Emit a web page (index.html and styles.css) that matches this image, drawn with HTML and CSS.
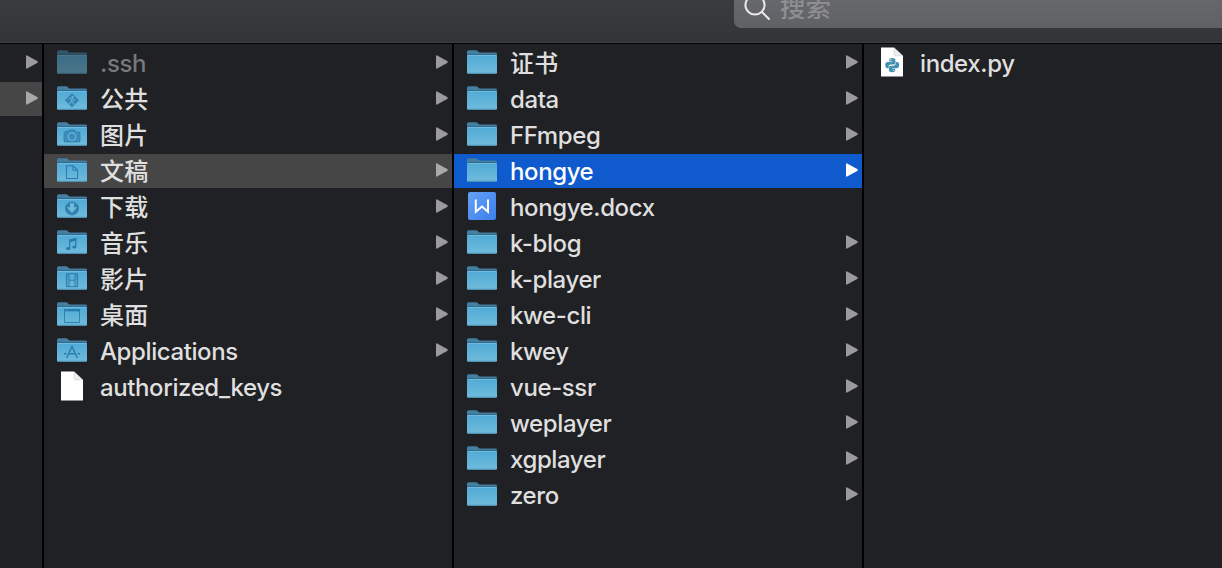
FILE: index.html
```html
<!DOCTYPE html>
<html lang="zh-CN">
<head>
<meta charset="utf-8">
<title>Finder</title>
<link rel="stylesheet" href="styles.css">
</head>
<body>
<svg class="sprites" aria-hidden="true">
  <defs>
    <linearGradient id="front" x1="0" y1="0" x2="0" y2="1">
      <stop offset="0" stop-color="#50aad6"/>
      <stop offset="1" stop-color="#70bbdc"/>
    </linearGradient>
    <linearGradient id="wps" x1="0" y1="0" x2="1" y2="1">
      <stop offset="0" stop-color="#64a0f6"/>
      <stop offset="1" stop-color="#3b80ec"/>
    </linearGradient>
    <symbol id="folder" viewBox="0 0 30 24">
      <path d="M0 8V1.8Q0 .2 1.6 .2H9Q10.3 .2 11 1.2Q11.8 2.4 13.2 2.4H28.6Q30 2.4 30 3.8V8Z" fill="#427fa0"/>
      <path d="M0 4H30V6H0Z" fill="#37698a"/>
      <path d="M0 6.2Q0 5 1.2 5H28.8Q30 5 30 6.2V22.4Q30 23.8 28.6 23.8H1.4Q0 23.8 0 22.4Z" fill="url(#front)"/>
      <path d="M.6 5.5H29.4" stroke="#70bee2" stroke-width=".9"/>
      <path d="M.8 23.3H29.2" stroke="#4b8fb0" stroke-width=".9"/>
    </symbol>
    <symbol id="arrow" viewBox="0 0 12 14">
      <path d="M0 1.2Q0 0 1.1 .5L11.2 6.1Q12.4 7 11.2 7.9L1.1 13.5Q0 14 0 12.8Z" fill="currentColor"/>
    </symbol>
    <symbol id="page" viewBox="0 0 24 30">
      <path d="M1 .5H14L23 9V29.2Q23 29.6 22.6 29.6H1.4Q1 29.6 1 29.2Z" fill="#fff"/>
      <path d="M14 .5V7.5Q14 9 15.5 9H23Z" fill="#ededed"/>
      <path d="M14.2 1V7.4Q14.2 8.8 15.6 8.8H22.6" fill="none" stroke="#d2d2d2" stroke-width=".6"/>
    </symbol>
    <symbol id="public" viewBox="0 0 30 24">
      <path d="M15 7L22.2 14.2L15 21.4L7.8 14.2Z" fill="#3486b4"/>
      <circle cx="15.6" cy="10.8" r="1" fill="#70b9dc"/>
      <path d="M12 13.6L13.4 12.1L15.6 12.3L16.5 14L18 14.5M15.2 12.5L14.5 15L16.3 16.5V18.5M14.3 15L13.7 16.7L12 17.7" fill="none" stroke="#70b9dc" stroke-width="1"/>
    </symbol>
    <symbol id="camera" viewBox="0 0 30 24">
      <path d="M8 10H11L12.2 8H17.8L19 10H22Q23 10 23 11V19Q23 20 22 20H8Q7 20 7 19V11Q7 10 8 10Z" fill="#3b8fbd" stroke="#2b7ba8" stroke-width=".7"/>
      <path d="M8.5 9.2H10.5" stroke="#2b7ba8" stroke-width="1"/>
      <circle cx="15" cy="14.6" r="3.7" fill="#3d8fbd" stroke="#7bc0df" stroke-width="1"/>
      <circle cx="15" cy="14.6" r="2.5" fill="none" stroke="#2b7ba8" stroke-width=".6"/>
    </symbol>
    <symbol id="document" viewBox="0 0 30 24">
      <path d="M9.5 7.7H16L20.6 12.3V20.5H9.5ZM16 7.7V12.3H20.6" fill="none" stroke="#2c7dab" stroke-width="1.1"/>
    </symbol>
    <symbol id="download" viewBox="0 0 30 24">
      <circle cx="15" cy="14.4" r="7" fill="#3182b0"/>
      <path d="M13 9.2H17V13.2H20.2L15 19L9.8 13.2H13Z" fill="#6eb9dc"/>
    </symbol>
    <symbol id="music" viewBox="0 0 30 24">
      <path d="M12.7 18V10.2L18.8 8.7V16.8" fill="none" stroke="#287aa9" stroke-width="1.2"/>
      <path d="M12.2 9.5L19.3 7.8V10.6L12.2 12.3Z" fill="#287aa9"/>
      <ellipse cx="11.2" cy="18.5" rx="2.2" ry="1.6" fill="#287aa9"/>
      <ellipse cx="17.3" cy="17" rx="2.1" ry="1.6" fill="#287aa9"/>
    </symbol>
    <symbol id="film" viewBox="0 0 30 24">
      <path d="M9.4 7.8H20.6V20.6H9.4ZM12 7.8V20.6M18 7.8V20.6M12 14.2H18" fill="none" stroke="#2c7dab" stroke-width="1"/>
      <path d="M10.7 8V20.6M19.3 8V20.6" stroke="#3081ae" stroke-width="2" stroke-dasharray=".9 1.4"/>
    </symbol>
    <symbol id="desktop" viewBox="0 0 30 24">
      <path d="M7.5 7.8H22.5V20.5H7.5Z" fill="none" stroke="#3081ae" stroke-width="1"/>
      <path d="M7 8.2H23" stroke="#287aa9" stroke-width="2.2"/>
      <path d="M8.5 8.1H12" stroke="#70b9dc" stroke-width=".6" stroke-dasharray=".7 .5"/>
    </symbol>
    <symbol id="apps" viewBox="0 0 30 24">
      <path d="M9.6 20L15.4 7.6M14.6 7.6L20.4 20" fill="none" stroke="#2c7dab" stroke-width="1.4"/>
      <path d="M7 15.8H9.4M11 15.8H17.5M20.6 15.8H23" stroke="#2c7dab" stroke-width="1.5"/>
    </symbol>
    <symbol id="writer" viewBox="0 0 30 30">
      <rect x="1" y="1" width="28" height="28" rx="2" fill="url(#wps)"/>
      <path d="M8.8 8.5V20.8L15 15.5L21 20.8V8.5" fill="none" stroke="#fff" stroke-width="2"/>
    </symbol>
    <symbol id="python" viewBox="0 0 24 30">
      <use href="#page"/>
      <g transform="translate(5.2 11)">
        <path id="snake" d="M6.8 0C4.5 0 4 .8 4 2V3.4H7.2V4H2.5C.9 4 0 5.2 0 7.1S.9 10.2 2.2 10.2H3.5V8.6C3.5 7.3 4.5 6.5 5.7 6.5H8.5C9.5 6.5 10.2 5.7 10.2 4.7V2C10.2 .8 9.1 0 6.8 0ZM5.5 1.1A.6 .6 0 1 1 5.5 2.3A.6 .6 0 0 1 5.5 1.1Z" fill="#4490b0" fill-rule="evenodd"/>
        <use href="#snake" transform="rotate(180 7 7.1)"/>
      </g>
    </symbol>
  </defs>
</svg>
<div class="window">
  <header class="toolbar">
    <div class="search">
      <svg class="lens" viewBox="0 0 28 28"><circle cx="11" cy="11" r="9.6"/><path d="M18 18L25 25"/></svg>
      <span>搜索</span>
    </div>
  </header>
  <main class="columns">
    <ul class="column parent">
      <li class="row"><svg class="arrow"><use href="#arrow"/></svg></li>
      <li class="row active"><svg class="arrow"><use href="#arrow"/></svg></li>
    </ul>
    <ul class="column">
      <li class="row hidden"><svg class="folder"><use href="#folder"/></svg><span class="name">.ssh</span><svg class="arrow"><use href="#arrow"/></svg></li>
      <li class="row"><svg class="folder"><use href="#folder"/><use href="#public"/></svg><span class="name cjk">公共</span><svg class="arrow"><use href="#arrow"/></svg></li>
      <li class="row"><svg class="folder"><use href="#folder"/><use href="#camera"/></svg><span class="name cjk">图片</span><svg class="arrow"><use href="#arrow"/></svg></li>
      <li class="row active"><svg class="folder"><use href="#folder"/><use href="#document"/></svg><span class="name cjk">文稿</span><svg class="arrow"><use href="#arrow"/></svg></li>
      <li class="row"><svg class="folder"><use href="#folder"/><use href="#download"/></svg><span class="name cjk">下载</span><svg class="arrow"><use href="#arrow"/></svg></li>
      <li class="row"><svg class="folder"><use href="#folder"/><use href="#music"/></svg><span class="name cjk">音乐</span><svg class="arrow"><use href="#arrow"/></svg></li>
      <li class="row"><svg class="folder"><use href="#folder"/><use href="#film"/></svg><span class="name cjk">影片</span><svg class="arrow"><use href="#arrow"/></svg></li>
      <li class="row"><svg class="folder"><use href="#folder"/><use href="#desktop"/></svg><span class="name cjk">桌面</span><svg class="arrow"><use href="#arrow"/></svg></li>
      <li class="row"><svg class="folder"><use href="#folder"/><use href="#apps"/></svg><span class="name">Applications</span><svg class="arrow"><use href="#arrow"/></svg></li>
      <li class="row"><svg class="file"><use href="#page"/></svg><span class="name">authorized_keys</span></li>
    </ul>
    <ul class="column">
      <li class="row"><svg class="folder"><use href="#folder"/></svg><span class="name cjk">证书</span><svg class="arrow"><use href="#arrow"/></svg></li>
      <li class="row"><svg class="folder"><use href="#folder"/></svg><span class="name">data</span><svg class="arrow"><use href="#arrow"/></svg></li>
      <li class="row"><svg class="folder"><use href="#folder"/></svg><span class="name">FFmpeg</span><svg class="arrow"><use href="#arrow"/></svg></li>
      <li class="row selected"><svg class="folder"><use href="#folder"/></svg><span class="name">hongye</span><svg class="arrow"><use href="#arrow"/></svg></li>
      <li class="row"><svg class="writer"><use href="#writer"/></svg><span class="name">hongye.docx</span></li>
      <li class="row"><svg class="folder"><use href="#folder"/></svg><span class="name">k-blog</span><svg class="arrow"><use href="#arrow"/></svg></li>
      <li class="row"><svg class="folder"><use href="#folder"/></svg><span class="name">k-player</span><svg class="arrow"><use href="#arrow"/></svg></li>
      <li class="row"><svg class="folder"><use href="#folder"/></svg><span class="name">kwe-cli</span><svg class="arrow"><use href="#arrow"/></svg></li>
      <li class="row"><svg class="folder"><use href="#folder"/></svg><span class="name">kwey</span><svg class="arrow"><use href="#arrow"/></svg></li>
      <li class="row"><svg class="folder"><use href="#folder"/></svg><span class="name">vue-ssr</span><svg class="arrow"><use href="#arrow"/></svg></li>
      <li class="row"><svg class="folder"><use href="#folder"/></svg><span class="name">weplayer</span><svg class="arrow"><use href="#arrow"/></svg></li>
      <li class="row"><svg class="folder"><use href="#folder"/></svg><span class="name">xgplayer</span><svg class="arrow"><use href="#arrow"/></svg></li>
      <li class="row"><svg class="folder"><use href="#folder"/></svg><span class="name">zero</span><svg class="arrow"><use href="#arrow"/></svg></li>
    </ul>
    <ul class="column last">
      <li class="row"><svg class="file"><use href="#python"/></svg><span class="name">index.py</span></li>
    </ul>
  </main>
</div>
</body>
</html>
```
FILE: styles.css
```css
* { box-sizing: border-box; }
body {
  margin: 0;
  background: #202124;
  font-family: Inter, "Noto Sans CJK SC", sans-serif;
  font-size: 24px;
  font-weight: 450;
  color: #dfdfdf;
}
.sprites { position: absolute; width: 0; height: 0; }
.window { width: 1222px; height: 568px; display: flex; flex-direction: column; overflow: hidden; }
.toolbar {
  height: 44px;
  flex: none;
  display: flex;
  justify-content: flex-end;
  align-items: flex-start;
  background: linear-gradient(#3b3c3f, #333438);
  border-bottom: 1px solid #000;
  box-shadow: inset 0 -1px #3d3e41;
}
.search {
  width: 488px;
  height: 28px;
  display: flex;
  align-items: flex-end;
  gap: 8px;
  padding-left: 10px;
  background: linear-gradient(#67686b, #606164);
  border-bottom-left-radius: 7px;
  color: #8d8e91;
}
.search span { font-size: 25.5px; line-height: 36px; height: 38px; }
.lens { width: 28px; height: 28px; margin-bottom: 6px; flex: none; fill: none; stroke: #e9e9ea; stroke-width: 2; stroke-linecap: round; }
.columns { flex: 1; display: flex; }
.column {
  width: 410px;
  flex: none;
  margin: 0;
  padding: 2px 0 0;
  display: flex;
  flex-direction: column;
  gap: 2px;
  border-right: 2px solid #000;
  list-style: none;
}
.parent { width: 44px; }
.last { width: 358px; border-right: 0; }
.row { height: 34px; flex: none; display: flex; align-items: center; padding: 0 4px 0 13px; }
.name { line-height: 34px; letter-spacing: -0.4px; white-space: nowrap; padding-top: 1px; }
.cjk { letter-spacing: 0.3px; }
.folder { width: 30px; height: 24px; margin: 0 13px 2px 0; flex: none; }
.file { width: 24px; height: 30px; margin: 0 16px 3px 3px; flex: none; }
.writer { width: 30px; height: 30px; margin: 0 13px 2px 0; flex: none; }
.arrow { width: 12px; height: 14px; margin: 0 0 2px auto; flex: none; color: #9b9b9e; }
.active { background: #464646; }
.active .arrow { color: #a9a9a9; }
.selected { background: #0f5bce; color: #fff; }
.selected .arrow { color: #fff; }
.hidden .folder { opacity: .55; }
.hidden .name { color: #77787b; }
```
